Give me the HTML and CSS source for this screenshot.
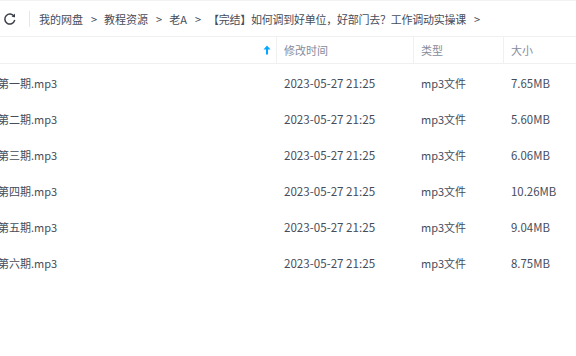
FILE: index.html
```html
<!DOCTYPE html>
<html lang="zh">
<head>
<meta charset="utf-8">
<link rel="stylesheet" href="styles.css">
</head>
<body>
<div class="page">
  <div class="crumbbar">
    <span class="refresh">
      <svg width="14" height="14" viewBox="0 0 14 14">
        <path d="M11.2 4.6 A5 5 0 1 0 11.6 8.6" fill="none" stroke="#3b3f48" stroke-width="1.5" stroke-linecap="round"/>
        <path d="M8.6 4.9 L12 4.9 L12 1.5 Z" fill="#3b3f48"/>
      </svg>
    </span>
    <span class="vsep"></span>
    <nav class="crumbs">
      <span class="crumb">我的网盘</span><span class="arrow">&gt;</span>
      <span class="crumb">教程资源</span><span class="arrow">&gt;</span>
      <span class="crumb">老A</span><span class="arrow">&gt;</span>
      <span class="crumb long">【完结】如何调到好单位，好部门去？工作调动实操课</span><span class="arrow">&gt;</span>
    </nav>
  </div>
  <div class="head">
    <div class="c-name h-name">
      <svg class="sort" width="8" height="10" viewBox="0 0 8 10"><path d="M4 0.5 L7.5 4.5 L5 4.5 L5 9.5 L3 9.5 L3 4.5 L0.5 4.5 Z" fill="#06a7ff"/></svg>
    </div>
    <div class="c-date h-cell">修改时间</div>
    <div class="c-type h-cell">类型</div>
    <div class="c-size h-cell">大小</div>
  </div>
  <div class="rows">
    <div class="row"><div class="c-name"><span class="name">第一期.mp3</span></div><div class="c-date">2023-05-27 21:25</div><div class="c-type">mp3文件</div><div class="c-size">7.65MB</div></div>
    <div class="row"><div class="c-name"><span class="name">第二期.mp3</span></div><div class="c-date">2023-05-27 21:25</div><div class="c-type">mp3文件</div><div class="c-size">5.60MB</div></div>
    <div class="row"><div class="c-name"><span class="name">第三期.mp3</span></div><div class="c-date">2023-05-27 21:25</div><div class="c-type">mp3文件</div><div class="c-size">6.06MB</div></div>
    <div class="row"><div class="c-name"><span class="name">第四期.mp3</span></div><div class="c-date">2023-05-27 21:25</div><div class="c-type">mp3文件</div><div class="c-size">10.26MB</div></div>
    <div class="row"><div class="c-name"><span class="name">第五期.mp3</span></div><div class="c-date">2023-05-27 21:25</div><div class="c-type">mp3文件</div><div class="c-size">9.04MB</div></div>
    <div class="row"><div class="c-name"><span class="name">第六期.mp3</span></div><div class="c-date">2023-05-27 21:25</div><div class="c-type">mp3文件</div><div class="c-size">8.75MB</div></div>
  </div>
</div>
</body>
</html>
```
FILE: styles.css
```css
html, body {
  margin: 0;
  padding: 0;
  background: #fff;
}
body {
  width: 576px;
  height: 356px;
  overflow: hidden;
  font-family: "Noto Sans CJK SC", "Noto Sans", sans-serif;
  font-size: 11px;
  color: #454d5a;
}
.page {
  border-top: 1px solid #f2f2f2;
}
.crumbbar {
  height: 35px;
  display: flex;
  align-items: center;
  border-bottom: 1px solid #f0f0f0;
  white-space: nowrap;
}
.refresh {
  width: 14px;
  height: 14px;
  margin-left: 3px;
  display: flex;
}
.vsep {
  width: 1px;
  height: 16px;
  background: #e6e6e6;
  margin-left: 12px;
  margin-right: 9px;
}
.crumbs {
  display: flex;
  align-items: center;
  color: #454d5a;
}
.arrow {
  margin: 0 7px 0 8px;
  color: #454d5a;
}
.long {
  letter-spacing: -0.25px;
}
.head {
  height: 26px;
  display: flex;
  align-items: center;
  border-bottom: 1px solid #f0f0f0;
  color: #878c9c;
}
.h-name {
  display: flex;
  justify-content: flex-end;
  align-items: center;
  padding-right: 5px;
  box-sizing: border-box;
}
.h-cell {
  height: 26px;
  display: flex;
  align-items: center;
  border-left: 1px solid #f0f0f0;
  padding-left: 7px;
  box-sizing: border-box;
}
.c-name { width: 276px; flex: none; overflow: hidden; white-space: nowrap; }
.c-date { width: 137px; flex: none; }
.c-type { width: 90px; flex: none; }
.c-size { flex: 1; }
.rows {
  padding-top: 1px;
}
.row {
  height: 36px;
  display: flex;
  align-items: center;
}
.row .c-date, .row .c-type, .row .c-size {
  padding-left: 8px;
  box-sizing: border-box;
}
.row .c-date { font-size: 11.6px; }
.row .c-size { font-size: 11.4px; }
.name {
  display: inline-block;
  margin-left: -2px;
}
.sort {
  display: block;
}
```
